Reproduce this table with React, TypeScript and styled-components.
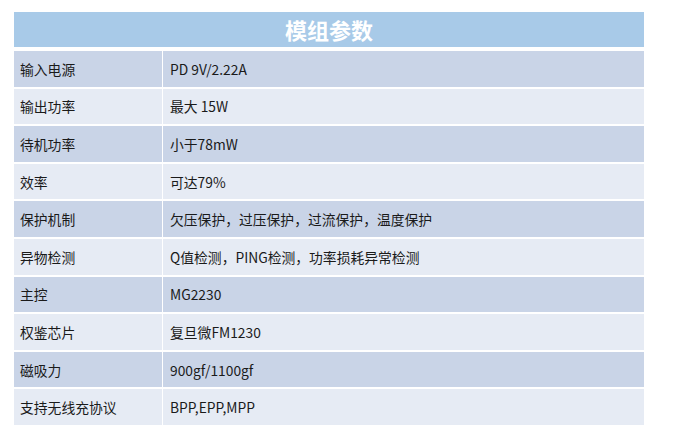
import React from 'react'
import styled, { createGlobalStyle } from 'styled-components'

const specs: [string, string][] = [
  ['输入电源', 'PD 9V/2.22A'],
  ['输出功率', '最大 15W'],
  ['待机功率', '小于78mW'],
  ['效率', '可达79%'],
  ['保护机制', '欠压保护，过压保护，过流保护，温度保护'],
  ['异物检测', 'Q值检测，PING检测，功率损耗异常检测'],
  ['主控', 'MG2230'],
  ['权鉴芯片', '复旦微FM1230'],
  ['磁吸力', '900gf/1100gf'],
  ['支持无线充协议', 'BPP,EPP,MPP'],
]

export default function App() {
  return (
    <>
      <GlobalStyle />
      <Page>
        <SpecTable>
          <Title>模组参数</Title>
          <Rows>
            {specs.map(([label, value], i) => (
              <Row key={label} $dark={i % 2 === 0}>
                <Label>{label}</Label>
                <Value>{value}</Value>
              </Row>
            ))}
          </Rows>
        </SpecTable>
      </Page>
    </>
  )
}

const GlobalStyle = createGlobalStyle`
  html, body {
    margin: 0;
    padding: 0;
    background: #fff;
  }
  body {
    font-family: "Noto Sans CJK SC", "Noto Sans", sans-serif;
  }
`

const Page = styled.div`
  width: 674px;
  height: 432px;
  padding: 12px 0 0 14px;
  box-sizing: border-box;
`

const SpecTable = styled.div`
  width: 630px;
  display: flex;
  flex-direction: column;
  gap: 4px;
`

const Title = styled.div`
  height: 35px;
  background: #a8cae8;
  color: #fff;
  font-size: 22px;
  font-weight: bold;
  line-height: 35px;
  text-align: center;
`

const Rows = styled.div`
  display: grid;
  grid-auto-rows: 35.6px;
  row-gap: 2px;
`

const Row = styled.div<{ $dark: boolean }>`
  display: grid;
  grid-template-columns: 148px 1fr;
  column-gap: 1px;

  & > div {
    background: ${(p) => (p.$dark ? '#c9d4e7' : '#e6ebf4')};
  }
`

const Label = styled.div`
  display: flex;
  align-items: center;
  padding-left: 6px;
  font-size: 13.8px;
  color: #1a1a1a;
`

const Value = styled.div`
  display: flex;
  align-items: center;
  padding-left: 7px;
  font-size: 13.8px;
  color: #1a1a1a;
`
